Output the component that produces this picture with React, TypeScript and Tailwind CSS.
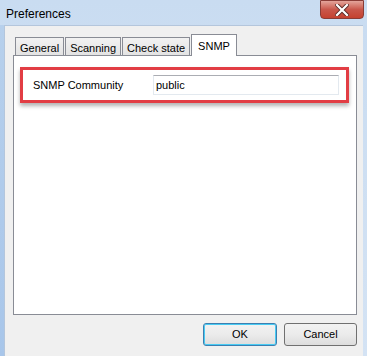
import React from "react";

const font = { fontFamily: '"Liberation Sans", Arial, sans-serif' };

function Tab({ label, selected }: { label: string; selected?: boolean }) {
  if (selected) {
    return (
      <div className="relative z-10 -mb-px h-[22px] px-[6px] pt-[3px] bg-white border border-b-0 border-[#898c95] text-[11px] text-black flex items-start">
        {label}
      </div>
    );
  }
  return (
    <div className="h-[18px] px-[4px] pt-[2px] bg-gradient-to-b from-[#f2f2f2] to-[#e3e3e3] border border-b-0 border-[#898c95] text-[11px] text-black flex items-start">
      {label}
    </div>
  );
}

export default function App() {
  return (
    <div
      className="w-[367px] h-[356px] flex flex-col overflow-hidden bg-gradient-to-b from-[#c9dcf1] to-[#d9e6f5]"
      style={font}
    >
      {/* Title bar */}
      <div className="h-[25px] flex items-start justify-between pl-[6px] pr-[3px]">
        <div className="pt-[5px] text-[12px] text-black">Preferences</div>
        <div className="w-[44px] h-[19px] rounded-b-[4px] border border-[#8a3c36] bg-gradient-to-b from-[#e3a49b] via-[#c9574b] to-[#c5412f] flex items-center justify-center">
          <svg width="14" height="12" viewBox="0 0 14 12">
            <path d="M2 1 L12 11 M12 1 L2 11" stroke="#5a2a26" strokeWidth="4" strokeLinecap="square" />
            <path d="M2 1 L12 11 M12 1 L2 11" stroke="#ffffff" strokeWidth="2.2" strokeLinecap="square" />
          </svg>
        </div>
      </div>

      {/* Body */}
      <div className="flex-1 flex">
        <div className="w-[4px] bg-gradient-to-b from-[#b7d0ec] to-[#a8c6ea]" />
        <div className="flex-1 bg-[#f0f0f0] border-t border-l border-[#b4c6dc] flex flex-col pl-[8px] pr-[6px] pt-[8px]">
          {/* Tabs */}
          <div className="flex items-end gap-[1px] pl-[2px]">
            <Tab label="General" />
            <Tab label="Scanning" />
            <Tab label="Check state" />
            <Tab label="SNMP" selected />
          </div>
          {/* Panel */}
          <div className="h-[260px] bg-white border border-[#898c95] pt-[11px] pl-[6px] pr-[7px]">
            <div className="h-[36px] border-[3px] border-[#e23d44] shadow-[0_3px_4px_rgba(0,0,0,0.3)] bg-white flex items-center pl-[10px] pr-[7px]">
              <div className="w-[120px] text-[11px] text-black">SNMP Community</div>
              <div className="flex-1 h-[20px] border border-[#e3e9ef] border-t-[#abadb3] bg-white flex items-center pl-[2px] text-[11px] text-black">
                public
              </div>
            </div>
          </div>
          {/* Buttons */}
          <div className="flex justify-end gap-[7px] pt-[8px]">
            <div className="w-[74px] h-[23px] rounded-[3px] border border-[#3c7fb1] bg-gradient-to-b from-[#f2f2f2] via-[#ebebeb] to-[#dddddd] shadow-[inset_0_0_0_1px_#48cbf3] flex items-center justify-center text-[11px] text-black">
              OK
            </div>
            <div className="w-[73px] h-[23px] rounded-[3px] border border-[#707070] bg-gradient-to-b from-[#f2f2f2] via-[#ebebeb] to-[#dddddd] flex items-center justify-center text-[11px] text-black">
              Cancel
            </div>
          </div>
        </div>
        <div className="w-[4px] bg-gradient-to-b from-[#c9dcf1] to-[#d4e3f4]" />
      </div>
    </div>
  );
}
